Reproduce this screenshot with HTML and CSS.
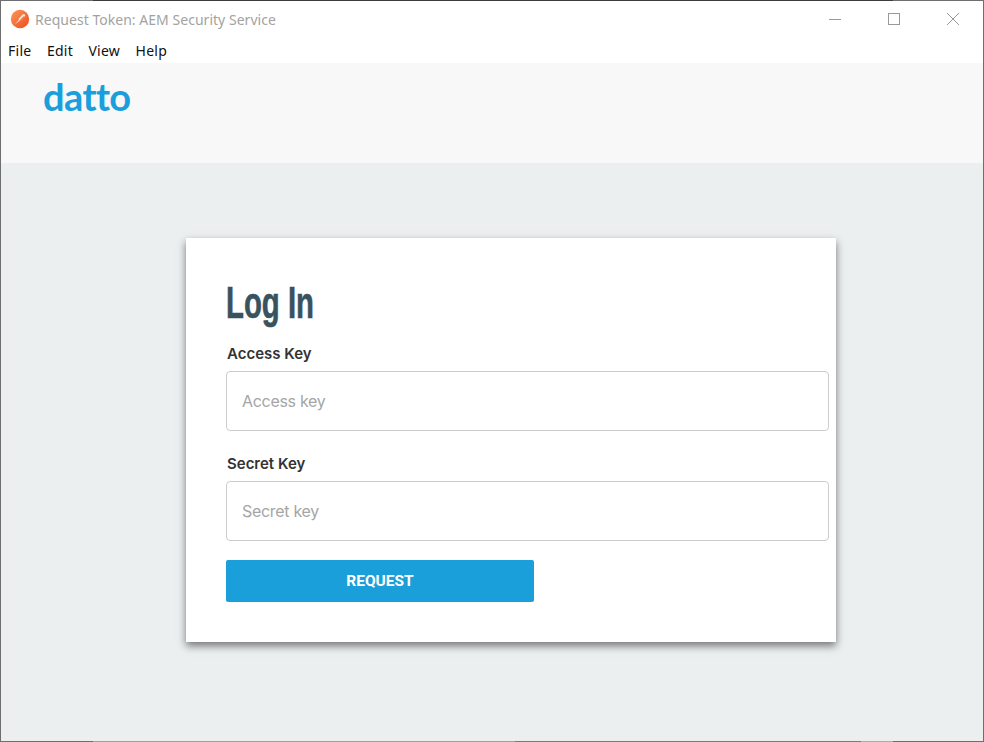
FILE: index.html
```html
<!DOCTYPE html>
<html lang="en">
<head>
<meta charset="utf-8">
<title>Request Token: AEM Security Service</title>
<link rel="stylesheet" href="styles.css">
</head>
<body>
<div class="window">
  <div class="edge">
    <span class="seg seg-a"></span>
    <span class="seg seg-top-mid"></span>
    <span class="seg seg-d"></span>
  </div>
  <div class="titlebar">
    <div class="title-left">
      <svg class="app-icon" width="20" height="20" viewBox="0 0 20 20">
        <defs><linearGradient id="g" x1="0" y1="0" x2="1" y2="1"><stop offset="0" stop-color="#fb9a5a"/><stop offset="1" stop-color="#ee4a1c"/></linearGradient></defs>
        <circle cx="10" cy="10" r="9.200" fill="url(#g)"/>
        <path d="M4.800 15.400 L9.200 10.200 L10.200 11.200 Z" fill="#fff" opacity="0.75"/>
        <path d="M8.500 10 L12.600 5.600 Q14 4.700 14.900 5.500 Q15.600 6.500 14.800 7.700 L10.400 11.900 Z" fill="#ffe9dc"/>
        <path d="M10.400 11.900 L14.800 7.700 L14 7 L9.700 11.200 Z" fill="#f0683a"/>
      </svg>
      <span class="title-text">Request Token: AEM Security Service</span>
    </div>
    <div class="win-controls">
      <span class="win-btn"><svg width="14" height="14" viewBox="0 0 14 14"><path d="M1 7.500H13" stroke="#999" fill="none"/></svg></span>
      <span class="win-btn"><svg width="14" height="14" viewBox="0 0 14 14"><rect x="1.500" y="1.500" width="11" height="11" stroke="#999" fill="none"/></svg></span>
      <span class="win-btn"><svg width="14" height="14" viewBox="0 0 14 14"><path d="M1 1L13 13M13 1L1 13" stroke="#999" fill="none"/></svg></span>
    </div>
  </div>
  <nav class="menubar">
    <span class="menu-item">File</span>
    <span class="menu-item">Edit</span>
    <span class="menu-item">View</span>
    <span class="menu-item">Help</span>
  </nav>
  <header class="brand-bar">
    <span class="logo">datto</span>
  </header>
  <main class="content">
    <form class="card">
      <h1 class="heading">Log In</h1>
      <label class="field-label" for="access">Access Key</label>
      <input class="field-input" id="access" type="text" placeholder="Access key">
      <label class="field-label second" for="secret">Secret Key</label>
      <input class="field-input" id="secret" type="text" placeholder="Secret key">
      <button class="submit" type="button">REQUEST</button>
    </form>
  </main>
  <div class="edge">
    <span class="seg seg-a"></span>
    <span class="seg seg-b"></span>
    <span class="seg seg-c"></span>
    <span class="seg seg-e"></span>
    <span class="seg seg-d"></span>
  </div>
</div>
</body>
</html>
```
FILE: styles.css
```css
* { box-sizing: border-box; }
html, body { margin: 0; height: 100%; }
body { background: #fff; overflow: hidden; }
.window {
  width: 984px;
  height: 742px;
  display: flex;
  flex-direction: column;
  position: relative;
  font-family: "Noto Sans", sans-serif;
}
.window::before,
.window::after {
  content: "";
  position: absolute;
  top: 0;
  bottom: 0;
  width: 1px;
  background: #6e6e6e;
}
.window::before { left: 0; }
.window::after { right: 0; }
.edge { height: 1px; flex: none; display: flex; }
.seg { display: block; height: 1px; }
.seg-a { width: 93px; background: #6e6e6e; }
.seg-top-mid { width: 800px; background: #3c3c3c; }
.seg-d { flex: 1; background: #6e6e6e; }
.seg-b { width: 422px; background: #a0a0a0; }
.seg-c { width: 346px; background: #b5654f; }
.seg-e { width: 32px; background: #ababab; }
.titlebar {
  height: 36px;
  display: flex;
  align-items: center;
  justify-content: space-between;
  background: #fff;
  flex: none;
}
.title-left { display: flex; align-items: center; padding-left: 10px; }
.app-icon { display: block; }
.title-text { margin-left: 5px; font-size: 14px; letter-spacing: 0.03px; color: #a3a3a3; white-space: nowrap; }
.win-controls { display: flex; padding-right: 2px; margin-top: -1px; }
.win-btn { width: 59px; height: 30px; display: flex; align-items: center; justify-content: center; }
.menubar {
  height: 26px;
  flex: none;
  display: flex;
  align-items: center;
  padding-left: 8px;
  gap: 15.5px;
  letter-spacing: 0.25px;
  background: #fff;
  font-size: 14px;
  color: #111;
}
.brand-bar {
  height: 100px;
  flex: none;
  margin: 0 1px;
  background: #f8f8f8;
  padding-left: 42px;
}
.logo {
  display: block;
  font-family: "Lato", sans-serif;
  font-weight: 700;
  font-size: 38px;
  line-height: 46px;
  letter-spacing: -0.6px;
  color: #1b9fdc;
  margin-top: 10px;
}
.content {
  flex: 1;
  margin: 0 1px;
  background: #ebeff0;
  padding: 75px 0 0 185px;
}
.card {
  width: 650px;
  height: 404px;
  background: #fff;
  box-shadow: 0 4px 8px 0 rgba(0, 0, 0, 0.5);
  padding: 40px 7px 0 40px;
  display: flex;
  flex-direction: column;
  font-family: "Inter", "Roboto", sans-serif;
}
.heading {
  margin: 0;
  font-family: "Liberation Sans", sans-serif;
  font-weight: 700;
  font-size: 44px;
  line-height: 50px;
  color: #38525f;
  -webkit-text-stroke: 0.6px #38525f;
  transform: scaleX(0.667);
  transform-origin: left center;
}
.field-label {
  margin-top: 14px;
  padding-left: 1px;
  font-size: 15px;
  line-height: 24px;
  font-weight: 600;
  color: #333;
}
.field-label.second { margin-top: 21px; }
.field-input {
  margin-top: 5px;
  height: 60px;
  width: 603px;
  flex: none;
  border: 1px solid #ccc;
  border-radius: 4px;
  padding: 0 15px;
  font-family: inherit;
  font-size: 16px;
  letter-spacing: -0.3px;
  color: #333;
  outline: none;
}
.field-input::placeholder { color: #a5a5a5; opacity: 1; }
.submit {
  margin-top: 19px;
  width: 308px;
  height: 42px;
  flex: none;
  border: 0;
  border-radius: 2px;
  background: #1a9fdb;
  color: #fff;
  font-family: "Roboto", sans-serif;
  font-size: 15.5px;
  font-weight: 700;
}
```
